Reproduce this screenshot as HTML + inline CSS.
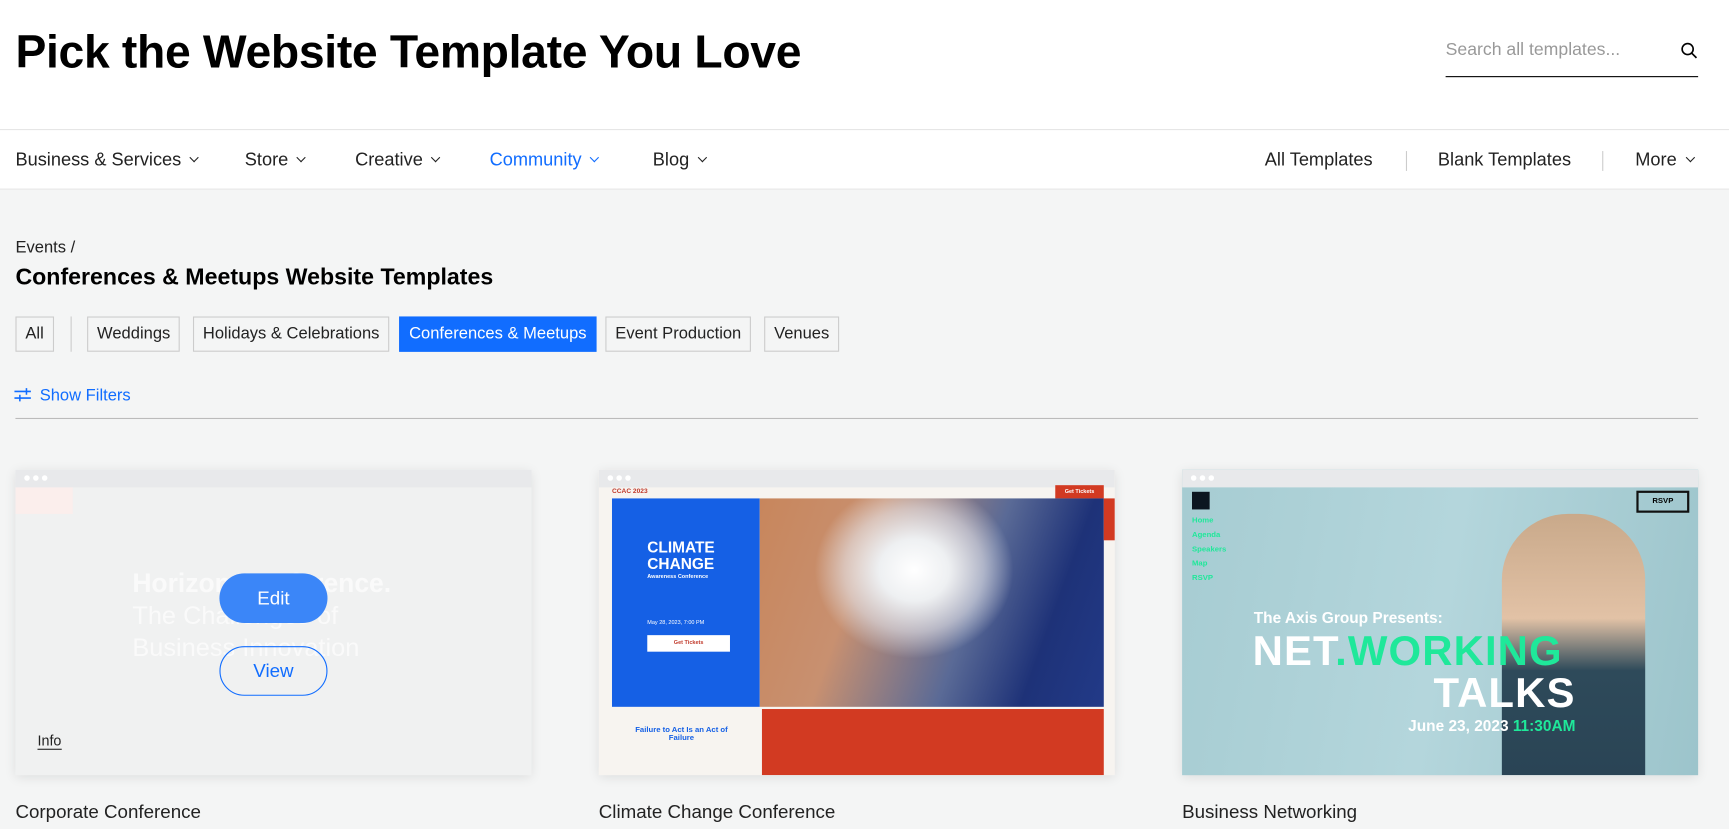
<!DOCTYPE html>
<html><head><meta charset="utf-8"><style>
*{margin:0;padding:0;box-sizing:border-box}
body{width:1729px;height:829px;overflow:hidden;background:#f4f5f5;font-family:"Liberation Sans",sans-serif;color:#000;position:relative}
#w{position:absolute;left:0;top:0;width:1568px;height:752px;transform:scale(1.10268);transform-origin:0 0}
.a{position:absolute}
.top{position:absolute;left:0;top:0;width:1568px;height:172px;background:#fff;border-bottom:1px solid #e6e6e6}
h1{position:absolute;left:14px;top:23px;font-size:42px;font-weight:bold;letter-spacing:-0.3px;white-space:nowrap}
.nav{font-size:16.5px;color:#222;white-space:nowrap}
.chev{display:inline-block;width:6px;height:6px;border-right:1.5px solid currentColor;border-bottom:1.5px solid currentColor;transform:rotate(45deg);margin-left:9px;position:relative;top:-4px}
.tag{position:absolute;top:287px;height:32px;border:1px solid #ccc;font-size:15px;line-height:30px;padding:0 8px;color:#222;background:#f4f5f5}
.card{position:absolute;top:426px;width:468px;height:277px;box-shadow:0 2px 10px rgba(0,0,0,.1);overflow:hidden}
.bar{height:16px;background:#e8e9eb;position:relative}
.bar i{position:absolute;top:5px;width:5px;height:5px;border-radius:50%;background:#fff}
.lbl{position:absolute;top:727px;font-size:17px;color:#222}
</style></head><body><div id="w">
<div class="top">
<h1>Pick the Website Template You Love</h1>
<div class="a" style="left:1311px;top:37px;font-size:16px;color:#999">Search all templates...</div>
<svg class="a" style="left:1524px;top:38px" width="16" height="16" viewBox="0 0 16 16"><circle cx="6.5" cy="6.5" r="5" fill="none" stroke="#000" stroke-width="1.5"/><path d="M10 10l4.5 4.5" stroke="#000" stroke-width="1.5"/></svg>
<div class="a" style="left:1311px;top:69px;width:229px;height:1px;background:#000"></div>
<div class="a" style="left:0;top:117px;width:1568px;height:1px;background:#e6e6e6"></div>
<div class="a nav" style="left:14px;top:136px">Business &amp; Services<span class="chev"></span></div>
<div class="a nav" style="left:222px;top:136px">Store<span class="chev"></span></div>
<div class="a nav" style="left:322px;top:136px">Creative<span class="chev"></span></div>
<div class="a nav" style="left:444px;top:136px;color:#116dff">Community<span class="chev"></span></div>
<div class="a nav" style="left:592px;top:136px">Blog<span class="chev"></span></div>
<div class="a nav" style="left:1147px;top:136px">All Templates</div>
<div class="a" style="left:1275px;top:137px;width:1px;height:18px;background:#ccc"></div>
<div class="a nav" style="left:1304px;top:136px">Blank Templates</div>
<div class="a" style="left:1453px;top:137px;width:1px;height:18px;background:#ccc"></div>
<div class="a nav" style="left:1483px;top:136px">More<span class="chev"></span></div>
</div>
<div class="a" style="left:14px;top:216px;font-size:15px;color:#222">Events /</div>
<div class="a" style="left:14px;top:240px;font-size:21px;font-weight:bold">Conferences &amp; Meetups Website Templates</div>
<div class="tag" style="left:14px">All</div>
<div class="a" style="left:64px;top:287px;width:1px;height:32px;background:#ccc"></div>
<div class="tag" style="left:79px">Weddings</div>
<div class="tag" style="left:175px">Holidays &amp; Celebrations</div>
<div class="tag" style="left:362px;background:#116dff;border-color:#116dff;color:#fff">Conferences &amp; Meetups</div>
<div class="tag" style="left:549px">Event Production</div>
<div class="tag" style="left:693px">Venues</div>
<svg class="a" style="left:13px;top:351px" width="16" height="14" viewBox="0 0 16 14"><path d="M0 4h15M0 10h15" stroke="#116dff" stroke-width="1.4"/><path d="M11 1v6M5 7v6" stroke="#116dff" stroke-width="1.4"/></svg>
<div class="a" style="left:36px;top:350px;font-size:15px;color:#116dff">Show Filters</div>
<div class="a" style="left:14px;top:379px;width:1526px;height:1px;background:#bbb"></div>

<div class="card" style="left:14px;background:#f0f1f1">
<div class="bar"><i style="left:8px"></i><i style="left:16px"></i><i style="left:24px"></i></div>
<div class="a" style="left:0;top:16px;width:52px;height:24px;background:#fbeeec"></div>
<div class="a" style="left:106px;top:90px;font-size:24px;font-weight:bold;color:#fafafa;white-space:nowrap">Horizon Conference.</div>
<div class="a" style="left:106px;top:118px;font-size:23px;color:#fafafa;line-height:29px">The Challenges of<br>Business Innovation</div>
<div class="a" style="left:185px;top:94px;width:98px;height:45px;border-radius:23px;background:#3b86f8;color:#fff;font-size:17px;text-align:center;line-height:45px">Edit</div>
<div class="a" style="left:185px;top:160px;width:98px;height:45px;border-radius:23px;border:1px solid #116dff;color:#116dff;font-size:17px;text-align:center;line-height:43px">View</div>
<div class="a" style="left:20px;top:238px;font-size:13px;color:#222;border-bottom:1px solid #222">Info</div>
</div>
<div class="lbl" style="left:14px">Corporate Conference</div>

<div class="card" style="left:543px;background:#f7f4f0">
<div class="bar"><i style="left:8px"></i><i style="left:16px"></i><i style="left:24px"></i></div>
<div class="a" style="left:12px;top:17px;font-size:6px;font-weight:bold;color:#c0392b">CCAC 2023</div>
<div class="a" style="left:414px;top:14px;width:44px;height:12px;background:#d23a22;color:#fff;font-size:5px;font-weight:bold;text-align:center;line-height:12px">Get Tickets</div>
<div class="a" style="left:12px;top:26px;width:134px;height:189px;background:#1560e5"></div>
<div class="a" style="left:146px;top:26px;width:312px;height:189px;background:radial-gradient(ellipse 90px 80px at 140px 65px,#fff 0,#eef0f2 35%,rgba(230,230,235,.6) 70%,transparent 100%),linear-gradient(110deg,#c8865c 0,#c89070 30%,#5a6a96 60%,#1e3278 80%,#223a88 100%)"></div>
<div class="a" style="left:458px;top:26px;width:10px;height:38px;background:#d23a22"></div>
<div class="a" style="left:44px;top:63px;color:#fff;font-weight:bold;font-size:14px;line-height:15px">CLIMATE<br>CHANGE</div>
<div class="a" style="left:44px;top:94px;color:#fff;font-weight:bold;font-size:5px">Awareness Conference</div>
<div class="a" style="left:44px;top:136px;color:#fff;font-size:5px">May 28, 2023, 7:00 PM</div>
<div class="a" style="left:44px;top:150px;width:75px;height:15px;background:#fff;color:#c0392b;font-size:5px;font-weight:bold;text-align:center;line-height:15px">Get Tickets</div>
<div class="a" style="left:148px;top:217px;width:310px;height:60px;background:#d23a22"></div>
<div class="a" style="left:30px;top:233px;width:90px;text-align:center;font-size:7px;font-weight:bold;color:#1560e5">Failure to Act Is an Act of Failure</div>
</div>
<div class="lbl" style="left:543px">Climate Change Conference</div>

<div class="card" style="left:1072px;background:linear-gradient(100deg,#a6ccd2 0,#b4d6dc 50%,#9cc4cb 100%)">
<div class="bar"><i style="left:8px"></i><i style="left:16px"></i><i style="left:24px"></i></div>
<div class="a" style="left:9px;top:20px;width:16px;height:16px;background:#0c1620"></div>
<div class="a" style="left:9px;top:40px;font-size:7px;font-weight:bold;color:#1fe89a;line-height:13px">Home<br>Agenda<br>Speakers<br>Map<br>RSVP</div>
<div class="a" style="left:412px;top:19px;width:48px;height:20px;border:2px solid #111;font-size:7px;font-weight:bold;text-align:center;line-height:16px">RSVP</div>
<div class="a" style="left:290px;top:40px;width:130px;height:237px;border-radius:60px 60px 0 0;background:linear-gradient(#c9a98a,#e2c2a6 40%,#2e4a5a 60%,#2a4455)"></div>
<div class="a" style="left:65px;top:126px;color:#fff;font-weight:bold;font-size:14px;white-space:nowrap">The Axis Group Presents:</div>
<div class="a" style="left:64px;top:144px;font-weight:bold;font-size:38px;white-space:nowrap;color:#fff;letter-spacing:1px">NET<span style="color:#1fe89a">.WORKING</span></div>
<div class="a" style="left:228px;top:182px;font-weight:bold;font-size:38px;color:#fff;letter-spacing:1px">TALKS</div>
<div class="a" style="left:205px;top:224px;font-weight:bold;font-size:14px;color:#fff;white-space:nowrap">June 23, 2023 <span style="color:#1fe89a">11:30AM</span></div>
</div>
<div class="lbl" style="left:1072px">Business Networking</div>
</div></body></html>
